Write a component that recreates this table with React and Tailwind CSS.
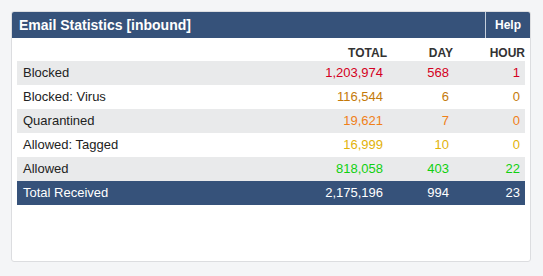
import React from 'react';

const rows = [
  { label: 'Blocked', total: '1,203,974', day: '568', hour: '1', color: 'text-[#d40022]', shade: true },
  { label: 'Blocked: Virus', total: '116,544', day: '6', hour: '0', color: 'text-[#c47a0a]' },
  { label: 'Quarantined', total: '19,621', day: '7', hour: '0', color: 'text-[#f08018]', shade: true },
  { label: 'Allowed: Tagged', total: '16,999', day: '10', hour: '0', color: 'text-[#e2b20a]' },
  { label: 'Allowed', total: '818,058', day: '403', hour: '22', color: 'text-[#10d010]', shade: true },
];

export default function App() {
  return (
    <div className="w-[543px] h-[276px] bg-[#f4f5f7] pt-[11px] pl-[11px] font-['Liberation_Sans',Arial,sans-serif]">
      <div className="w-[520px] h-[251px] bg-white border border-[#dcdde0] rounded-[3px] overflow-hidden">
        {/* title bar */}
        <div className="flex h-[26px] bg-[#36527a] text-white">
          <div className="flex-1 flex items-center pl-[7px] text-[14px] font-bold">Email Statistics [inbound]</div>
          <div className="w-[45px] flex items-center justify-center border-l border-[#c5cfdc] text-[12px] font-bold">Help</div>
        </div>

        <div className="px-[5px] pt-[6px]">
          <div className="grid grid-cols-[1fr_100px_66px_72px] h-[17px] items-center text-[12px] font-bold text-[#333]">
            <div></div>
            <div className="text-right">TOTAL</div>
            <div className="text-right">DAY</div>
            <div className="text-right">HOUR</div>
          </div>
          {rows.map(r => (
            <div key={r.label} className={`grid grid-cols-[1fr_100px_66px_72px] h-[24px] items-center text-[13px] ${r.shade ? 'bg-[#e9eaeb]' : 'bg-white'}`}>
              <div className="pl-[6px] text-[#222]">{r.label}</div>
              <div className={`text-right pr-[4px] ${r.color}`}>{r.total}</div>
              <div className={`text-right pr-[4px] ${r.color}`}>{r.day}</div>
              <div className={`text-right pr-[5px] ${r.color}`}>{r.hour}</div>
            </div>
          ))}
          <div className="grid grid-cols-[1fr_100px_66px_72px] h-[24px] items-center text-[13px] bg-[#36527a] text-white">
            <div className="pl-[6px]">Total Received</div>
            <div className="text-right pr-[4px]">2,175,196</div>
            <div className="text-right pr-[4px]">994</div>
            <div className="text-right pr-[5px]">23</div>
          </div>
        </div>
      </div>
    </div>
  );
}
